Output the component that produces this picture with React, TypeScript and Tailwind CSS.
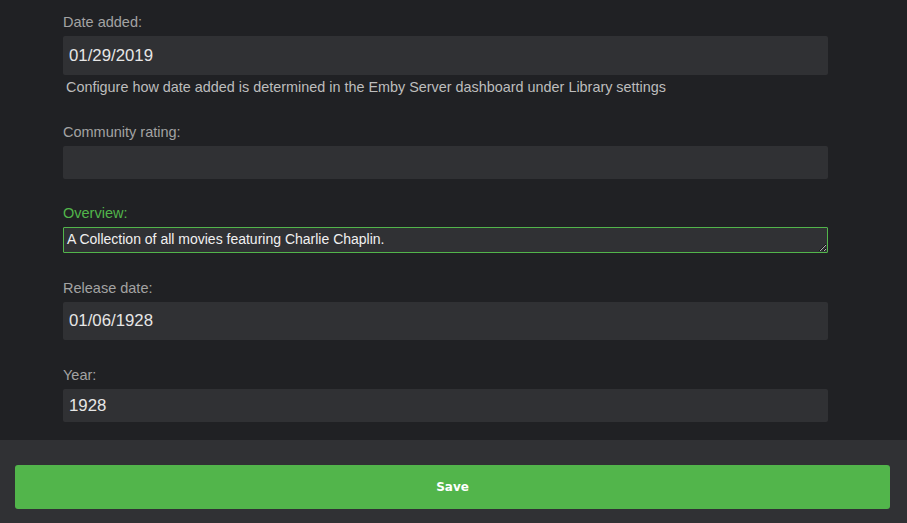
import React from "react";

const font = { fontFamily: '"Liberation Sans", Arial, sans-serif' };

function Label({ children, green }: { children: React.ReactNode; green?: boolean }) {
  return (
    <div
      className={`text-[14.5px] leading-[16px] h-[16px] mb-[6px] ${green ? "text-[#52b54b]" : "text-[#a3a3a3]"}`}
    >
      {children}
    </div>
  );
}

function Field({ value, h }: { value: string; h: string }) {
  return (
    <input
      readOnly
      defaultValue={value}
      className={`block w-full ${h} bg-[#303134] rounded-[2px] px-[6px] text-[16.8px] text-[#e6e6e6] outline-none border-0`}
      style={font}
    />
  );
}

export default function App() {
  return (
    <div className="w-[907px] h-[523px] bg-[#202124] flex flex-col overflow-hidden" style={font}>
      <div className="flex-1 px-[63px] pr-[79px] pt-[14px]">
        <Label>Date added:</Label>
        <Field value="01/29/2019" h="h-[39px]" />
        <div className="mt-[5px] text-[14.4px] leading-[14px] text-[#bdbdbd] pl-[3px] whitespace-nowrap">
          Configure how date added is determined in the Emby Server dashboard under Library settings
        </div>

        <div className="mt-[30px]">
          <Label>Community rating:</Label>
          <Field value="" h="h-[33px]" />
        </div>

        <div className="mt-[26px]">
          <Label green>Overview:</Label>
          <textarea
            readOnly
            defaultValue="A Collection of all movies featuring Charlie Chaplin."
            className="block w-full h-[26px] bg-[#303134] border border-[#52b54b] rounded-[1px] px-[3px] py-[2px] text-[14px] leading-[18px] text-[#f0f0f0] outline-none"
            style={font}
          />
        </div>

        <div className="mt-[27px]">
          <Label>Release date:</Label>
          <Field value="01/06/1928" h="h-[38px]" />
        </div>

        <div className="mt-[27px]">
          <Label>Year:</Label>
          <Field value="1928" h="h-[33px]" />
        </div>
      </div>

      <div className="h-[83px] bg-[#303134] pt-[25px] pl-[15px] pr-[17px] shrink-0">
        <button
          className="w-full h-[44px] bg-[#52b54b] rounded-[3px] text-white text-[12px] font-bold"
          style={{ fontFamily: '"DejaVu Sans", Verdana, sans-serif' }}
        >
          Save
        </button>
      </div>
    </div>
  );
}
